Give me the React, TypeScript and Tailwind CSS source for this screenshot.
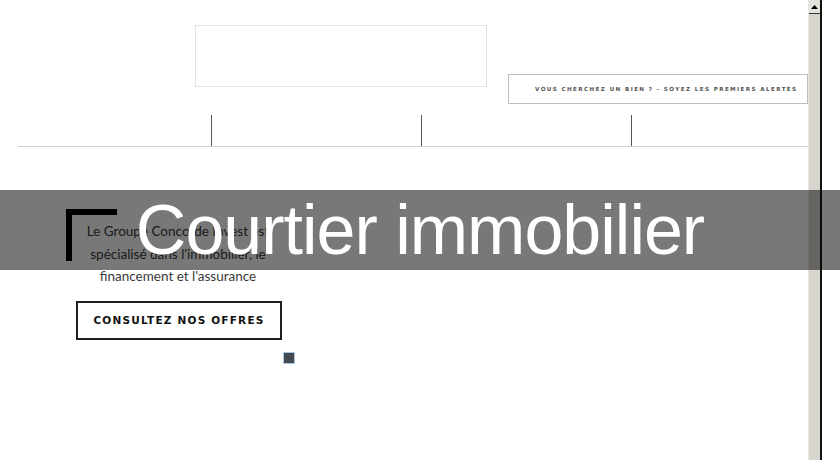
import React from "react";

export default function App() {
  return (
    <div className="relative w-[840px] h-[460px] bg-white overflow-hidden flex" style={{ fontFamily: "Lato, 'Noto Sans', sans-serif" }}>
      {/* main content */}
      <div className="w-[808px] h-full flex flex-col">
        <div className="flex items-start pl-[195px]">
          <div className="mt-[25px] w-[292px] h-[62px] border border-[#e2e2e2]" />
          <div className="ml-[21px] mt-[74px] w-[300px] h-[30px] border border-[#bdbdbd] flex items-center pl-[26px]">
            <span className="text-[5.6px] font-bold tracking-[1.4px] text-[#555] whitespace-nowrap" style={{ fontFamily: "'DejaVu Sans', sans-serif" }}>
              VOUS CHERCHEZ UN BIEN ? - SOYEZ LES PREMIERS ALERTÉS
            </span>
          </div>
        </div>
        <div className="mt-[11px] ml-[18px] h-[32px] flex border-b border-[#cfcfcf]">
          <div className="w-[193px]" />
          <div className="w-px bg-[#555]" />
          <div className="w-[209px]" />
          <div className="w-px bg-[#555]" />
          <div className="w-[209px]" />
          <div className="w-px bg-[#555]" />
          <div className="flex-1" />
        </div>
        <div className="relative mt-[62px] ml-[66px] w-[240px]">
          <div className="absolute left-0 top-0 w-[51px] h-[52px] border-l-[6px] border-t-[6px] border-black" />
          <div className="pt-[11px] w-[224px] text-center text-[13.5px] leading-[22.5px] text-[#3a3a3a]">
            <div>Le Groupe Concorde Invest est</div>
            <div>spécialisé dans l'immobilier, le</div>
            <div>financement et l'assurance</div>
          </div>
          <div className="mt-[13px] ml-[10px] w-[206px] h-[39px] border-2 border-[#1e1e1e] flex items-center justify-center">
            <span className="mt-[2px] text-[10.5px] font-bold tracking-[1.2px] text-[#111] whitespace-nowrap" style={{ fontFamily: "'DejaVu Sans', sans-serif" }}>
              CONSULTEZ NOS OFFRES
            </span>
          </div>
          <div className="mt-[12px] ml-[217px] w-[12px] h-[12px] bg-[#444a50] border border-[#a9c8e8]" />
        </div>
      </div>
      {/* scrollbar */}
      <div className="w-[14px] h-full bg-[#d8d5cf] border-l border-[#e8e6e2] border-r-2 border-r-[#111] flex flex-col">
        <div className="h-[14px] border-b border-[#333] bg-[#e4e2dd] flex items-center justify-center">
          <svg width="7" height="4" viewBox="0 0 7 4"><path d="M3.5 0 L7 4 L0 4 Z" fill="#000" /></svg>
        </div>
      </div>
      <div className="flex-1" />
      {/* overlay title */}
      <div className="absolute left-0 top-[190px] w-[840px] h-[80px] bg-black/[0.53] text-center">
        <span className="text-white text-[70px] leading-[80px] tracking-[-1px]" style={{ fontFamily: "'Liberation Sans', Arial, sans-serif" }}>
          Courtier immobilier
        </span>
      </div>
    </div>
  );
}
